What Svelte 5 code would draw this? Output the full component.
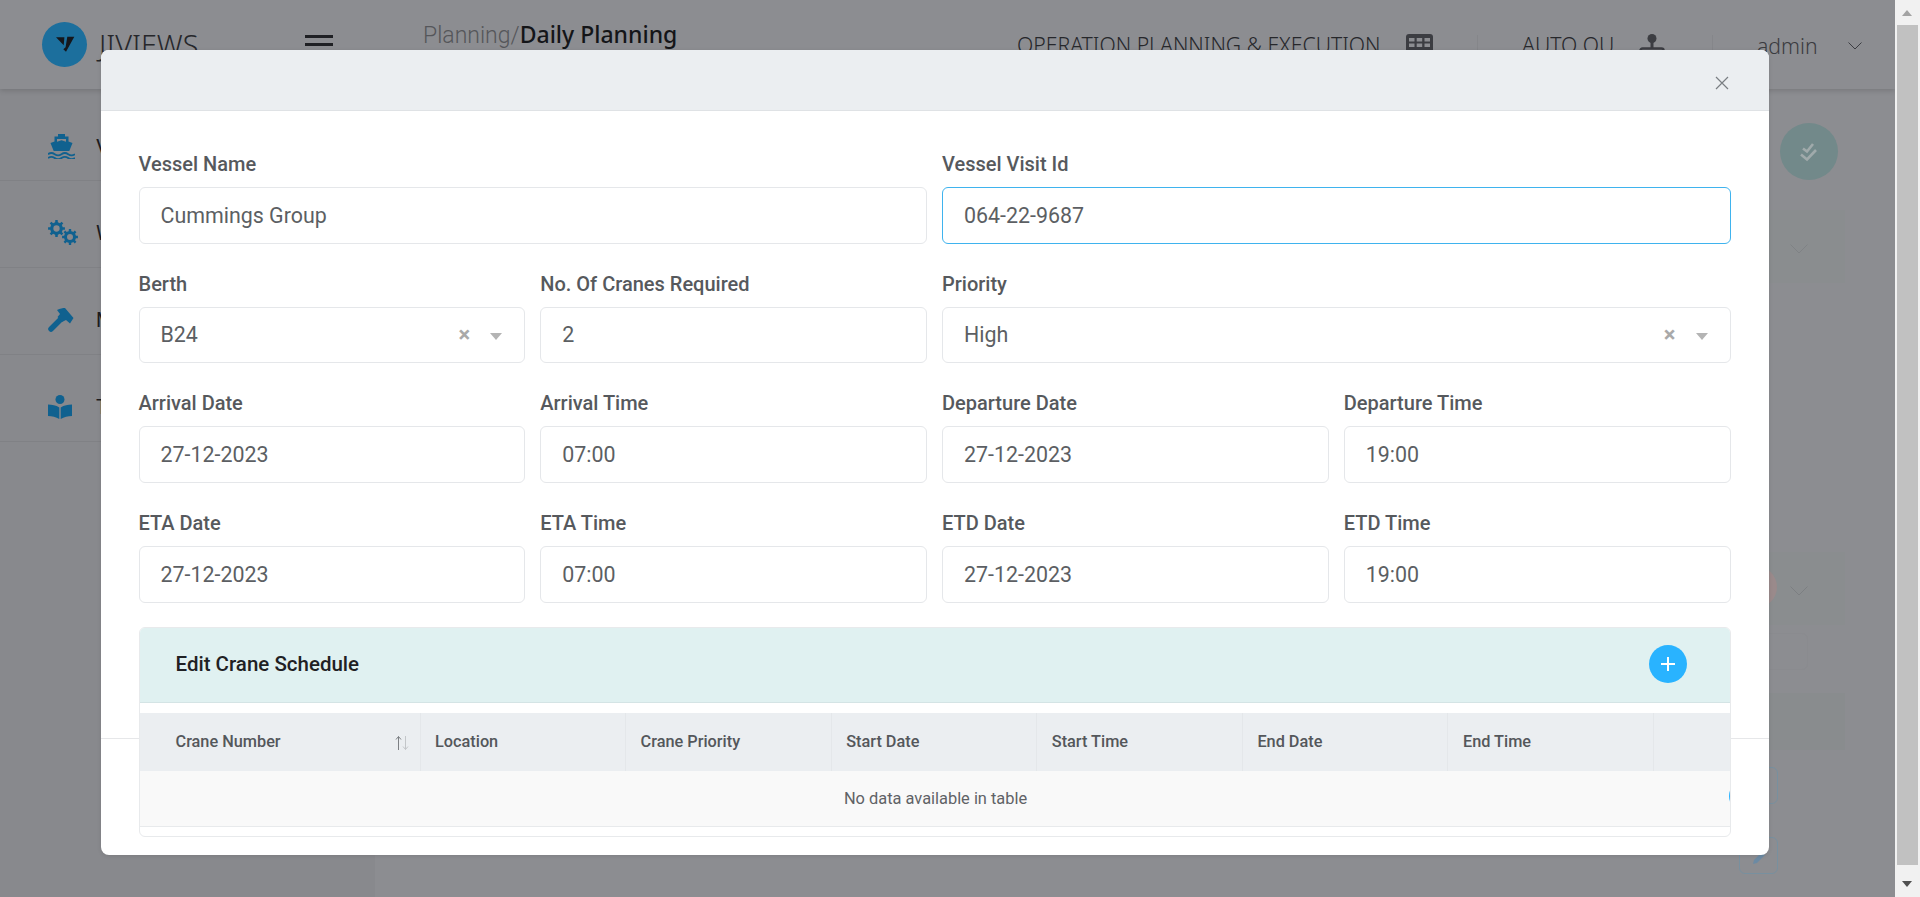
<script>
  const fields = [
    { label: 'Vessel Name', value: 'Cummings Group', span: 2 },
    { label: 'Vessel Visit Id', value: '064-22-9687', span: 2, focus: true },
    { label: 'Berth', value: 'B24', select: true },
    { label: 'No. Of Cranes Required', value: '2' },
    { label: 'Priority', value: 'High', span: 2, select: true },
    { label: 'Arrival Date', value: '27-12-2023' },
    { label: 'Arrival Time', value: '07:00' },
    { label: 'Departure Date', value: '27-12-2023' },
    { label: 'Departure Time', value: '19:00' },
    { label: 'ETA Date', value: '27-12-2023' },
    { label: 'ETA Time', value: '07:00' },
    { label: 'ETD Date', value: '27-12-2023' },
    { label: 'ETD Time', value: '19:00' }
  ];
  const columns = ['Crane Number', 'Location', 'Crane Priority', 'Start Date', 'Start Time', 'End Date', 'End Time', ''];
  const nav = ['Vessels', 'Work Plan', 'Maintenance', 'Tasks'];

  function gear(cx, cy, outer, inner, teeth) {
    let d = '';
    const step = (Math.PI * 2) / teeth;
    for (let i = 0; i < teeth; i++) {
      const a = i * step;
      const pts = [
        [inner, a - step * 0.5],
        [inner, a - step * 0.27],
        [outer, a - step * 0.18],
        [outer, a + step * 0.18],
        [inner, a + step * 0.27]
      ];
      for (const [r, t] of pts) {
        d += (d ? 'L' : 'M') + (cx + r * Math.cos(t)).toFixed(2) + ' ' + (cy + r * Math.sin(t)).toFixed(2);
      }
    }
    d += 'Z';
    const h = inner * 0.5;
    d += `M${cx - h} ${cy}a${h} ${h} 0 1 0 ${2 * h} 0a${h} ${h} 0 1 0 ${-2 * h} 0Z`;
    return d;
  }
  const gears = gear(8.5, 8.5, 8.5, 6.3, 8) + gear(22, 17, 8, 6, 8);
</script>

<div class="screen">
  <div class="page">
    <header class="topbar">
      <div class="brand">
        <span class="logo">
          <svg viewBox="0 0 45 45" width="45" height="45">
            <path d="M14 15.3h8.4l-.7 8z" fill="#15171c" />
            <path d="M25.3 14.7h7L24 29.7l-2.7-2.4 2.3-2z" fill="#15171c" />
          </svg>
        </span>
        <span class="brand-name">JIVIEWS</span>
      </div>
      <div class="burger"><i></i><i></i><i></i></div>
      <div class="crumbs"><span>Planning/</span><b>Daily Planning</b></div>
      <div class="tools">
        <span class="tool-text first">OPERATION PLANNING &amp; EXECUTION</span>
        <svg class="tool-icon" viewBox="0 0 27 22" width="27" height="22">
          <rect width="27" height="22" rx="3" fill="#3c3d42" />
          <g fill="#8c8d91">
            <rect x="3" y="4" width="5.5" height="3.5" /><rect x="10.7" y="4" width="5.5" height="3.5" /><rect x="18.5" y="4" width="5.5" height="3.5" />
            <rect x="3" y="9.5" width="5.5" height="3.5" /><rect x="10.7" y="9.5" width="5.5" height="3.5" /><rect x="18.5" y="9.5" width="5.5" height="3.5" />
          </g>
        </svg>
        <span class="sep one"></span>
        <span class="tool-text second">AUTO OU</span>
        <svg class="tool-icon org" viewBox="0 0 26 24" width="26" height="24">
          <circle cx="13" cy="4.5" r="4.5" fill="#3c3d42" />
          <path d="M13 8v6" stroke="#3c3d42" stroke-width="3" />
          <path d="M1.5 23v-6.500a2 2 0 0 1 2-2h19a2 2 0 0 1 2 2V23" fill="none" stroke="#3c3d42" stroke-width="2.500" />
        </svg>
        <span class="sep two"></span>
        <span class="admin">admin</span>
        <svg class="chev" viewBox="0 0 14 8" width="14" height="8"><path d="M.5.5 7 7l6.500-6.500" fill="none" stroke="#3c3d42" /></svg>
      </div>
    </header>

    <div class="below">
      <aside class="sidebar">
        {#each nav as item, i}
          <div class="nav-item">
            <span class="nav-icon">
              {#if i === 0}
                <svg viewBox="0 0 27 25" width="27" height="25" fill="#10618f">
                  <path d="M10 0h7v2.500h3.500v5l4 1.500-3.200 8H5.700L2.500 9l4-1.500v-5H10zM9 5v2.700l4.500-1.400L18 7.700V5z" fill-rule="evenodd" />
                  <path d="M0 20.200q3.400-2.400 6.700 0t6.800 0q3.400-2.400 6.700 0t6.800 0M0 24q3.400-2.400 6.700 0t6.800 0q3.400-2.400 6.700 0t6.800 0" fill="none" stroke="#10618f" stroke-width="1.800" />
                </svg>
              {:else if i === 1}
                <svg viewBox="0 0 30 25" width="30" height="25"><path d={gears} fill="#10618f" fill-rule="evenodd" /></svg>
              {:else if i === 2}
                <svg viewBox="0 0 27 24" width="27" height="24" fill="#10618f">
                  <path d="M3 21 15 9" stroke="#10618f" stroke-width="5.500" stroke-linecap="round" />
                  <path d="M9 2C12 .5 15 0 17 0l8.500 10-3.500 5.500-4-3.500-4 2-4.500-5L12 6z" />
                </svg>
              {:else}
                <svg viewBox="0 0 24 24" width="24" height="24" fill="#10618f">
                  <circle cx="12" cy="4.500" r="4.500" />
                  <path d="M0 9.500c4 0 8 .8 11.300 3V24C8 22 4 21 0 21zM24 9.500c-4 0-8 .8-11.300 3V24c3.300-2 7.300-3 11.300-3z" />
                </svg>
              {/if}
            </span>
            <span class="nav-label">{item}</span>
          </div>
        {/each}
      </aside>

      <main class="content">
        <div class="ghost-circle">
          <svg viewBox="0 0 20 20" width="20" height="20" fill="none" stroke="#a0aaab" stroke-width="2.600">
            <path d="M4 6.500 8 9.500 14 2" /><path d="M2 12.500 8 17.500 17 8" />
          </svg>
        </div>
        <div class="band first-band">
          <svg class="ghost-chev" viewBox="0 0 18 10" width="18" height="10"><path d="M.5.5 9 9l8.500-8.500" fill="none" stroke="#7f8285" /></svg>
        </div>
        <div class="band second-band">
          <span class="ghost-red"></span>
          <svg class="ghost-chev" viewBox="0 0 18 10" width="18" height="10"><path d="M.5.5 9 9l8.500-8.500" fill="none" stroke="#7c7f82" /></svg>
        </div>
        <div class="outline-row"></div>
        <div class="band third-band"></div>
        <div class="ghost-btn"></div>
        <div class="ghost-btn pen">
          <svg viewBox="0 0 14 14" width="14" height="14"><path d="M1 13l1-4 8-8 3 3-8 8z" fill="#6c8aa3" /></svg>
        </div>
      </main>
    </div>
  </div>

  <div class="scrollbar">
    <span class="arrow up"></span>
    <span class="thumb"></span>
    <span class="arrow down"></span>
  </div>

  <section class="modal">
    <div class="modal-head">
      <svg class="close" viewBox="0 0 14 14" width="14" height="14"><path d="M1 1l12 12M13 1 1 13" stroke="#7a7e83" stroke-width="1.200" fill="none" /></svg>
    </div>
    <div class="modal-body">
      <div class="form">
        {#each fields as f}
          <div class="field" class:wide={f.span === 2}>
            <div class="label">{f.label}</div>
            <div class="control" class:focus={f.focus}>
              <span class="value">{f.value}</span>
              {#if f.select}
                <span class="clear">×</span>
                <span class="caret"></span>
              {/if}
            </div>
          </div>
        {/each}
      </div>

      <div class="card">
        <div class="card-head">
          <span class="card-title">Edit Crane Schedule</span>
          <span class="add">
            <svg viewBox="0 0 16 16" width="16" height="16"><path d="M8 1v14M1 8h14" stroke="#fff" stroke-width="2" /></svg>
          </span>
        </div>
        <div class="table-wrap">
          <table>
            <thead>
              <tr>
                {#each columns as c, i}
                  <th class:firstcol={i === 0}>
                    {c}
                    {#if i === 0}
                      <svg class="sort" viewBox="0 0 14 16" width="14" height="16" fill="none">
                        <path d="M3.500 15V1.500M1 4.500l2.500-3 2.500 3" stroke="#7d8084" />
                        <path d="M10.500 1v13.500M8 11.500l2.500 3 2.500-3" stroke="#c3c6c9" />
                      </svg>
                    {/if}
                  </th>
                {/each}
              </tr>
            </thead>
            <tbody>
              <tr><td colspan="8">No data available in table</td></tr>
            </tbody>
          </table>
          <span class="edge-dot"></span>
        </div>
      </div>
    </div>
    <div class="modal-foot"></div>
  </section>
</div>

<style>
  :global(body) { margin: 0; background: #8c8d91; }
  * { box-sizing: border-box; }

  .screen { position: relative; display: flex; width: 1920px; height: 897px; overflow: hidden; font-family: Roboto, "Liberation Sans", sans-serif; }
  .page { display: flex; flex-direction: column; width: 1895px; background: #8c8d91; }

  .topbar { position: relative; display: flex; align-items: flex-start; height: 89px; box-shadow: 0 2px 5px rgba(0, 0, 0, .14); font-family: "Noto Sans", sans-serif; color: #1c1c20; }
  .brand { display: flex; align-items: center; width: 305px; padding: 22px 0 0 42px; gap: 12px; }
  .logo { display: block; width: 45px; height: 45px; border-radius: 50%; background: #1c6f9d; }
  .brand-name { font-size: 28.800px; font-weight: 300; line-height: 45px; color: #26272b; }
  .burger { display: flex; flex-direction: column; gap: 5px; width: 28px; padding-top: 35px; }
  .burger i { display: block; height: 3px; background: #1f2024; }
  .crumbs { margin-left: 90px; padding-top: 17px; font-size: 23px; line-height: 34px; white-space: nowrap; }
  .crumbs span { font-family: Roboto, sans-serif; font-weight: 300; color: #55565a; }
  .crumbs b { font-weight: 500; color: #141518; }
  .tools { position: absolute; inset: 0 auto auto 1017px; display: flex; align-items: flex-start; height: 89px; }
  .tool-text { padding-top: 30px; font-size: 21.200px; font-weight: 300; line-height: 30px; white-space: nowrap; color: #26272b; }
  .tool-text.first { width: 389px; }
  .tool-text.second { width: 117px; }
  .tool-icon { margin-top: 34px; flex: none; }
  .sep { width: 1px; height: 40px; margin-top: 35px; background: #85868a; }
  .sep.one { margin: 35px 44px 0 44px; }
  .sep.two { margin: 35px 44px 0 47px; }
  .admin { width: 91px; padding-top: 31px; font-size: 21.200px; font-weight: 300; line-height: 30px; color: #3a3b3f; }
  .chev { margin-top: 42px; flex: none; }

  .below { display: flex; flex: 1; }
  .sidebar { width: 375px; flex: none; background: #88898d; }
  .nav-item { position: relative; display: flex; align-items: center; height: 87px; padding: 17px 0 0 48px; border-bottom: 1px solid #808185; }
  .nav-item:first-child { height: 92px; padding-top: 24px; }
  .nav-icon { display: flex; width: 48px; flex: none; }
  .nav-label { font-size: 20px; color: #1c1c20; white-space: nowrap; }

  .content { display: flex; flex: 1; flex-direction: column; align-items: flex-end; padding: 34px 50px 0 25px; }
  .ghost-circle { display: flex; align-items: center; justify-content: center; width: 58px; height: 57px; margin-right: 7px; border-radius: 50%; background: #72898a; }
  .band { position: relative; width: 100%; background: #8a8d8f; }
  .first-band { height: 73px; margin-top: 30px; }
  .second-band { height: 73px; margin-top: 269px; }
  .third-band { height: 57px; margin-top: 23px; background: #898c8e; }
  .ghost-red { position: absolute; top: 14px; right: 68px; width: 42px; height: 42px; border-radius: 50%; background: #9a8a8b; }
  .ghost-chev { position: absolute; top: 34px; right: 37px; }
  .outline-row { width: calc(100% - 37px); height: 37px; margin: 8px 37px 0 0; border: 1px solid #8a8b8f; border-radius: 6px; }
  .ghost-btn { display: flex; align-items: center; justify-content: center; width: 39px; height: 37px; margin: 17px 67px 0 0; border: 1px solid #78909f; border-radius: 6px; }
  .ghost-btn.pen { margin-top: 33px; padding-top: 4px; }

  .scrollbar { position: relative; width: 25px; background: #f1f1f1; }
  .thumb { position: absolute; top: 25px; left: 2px; width: 21px; height: 840px; background: #c1c1c1; }
  .arrow { position: absolute; left: 7px; width: 0; height: 0; border-left: 5px solid transparent; border-right: 5px solid transparent; }
  .arrow.up { top: 10px; border-bottom: 6px solid #a3a3a3; }
  .arrow.down { top: 881px; border-top: 6px solid #505050; }

  .modal { position: absolute; top: 50px; left: 101px; display: flex; flex-direction: column; width: 1668px; height: 805px; border-radius: 8px; background: #fff; box-shadow: 0 1px 4px rgba(0, 0, 0, .1); }
  .modal-head { position: relative; height: 61px; flex: none; border-radius: 8px 8px 0 0; border-bottom: 1px solid #dfe2e5; background: #ebeef1; }
  .close { position: absolute; top: 26px; right: 40px; }
  .modal-body { height: 627px; flex: none; padding: 41px 38.500px 0 37.500px; }
  .modal-foot { flex: 1; border-top: 1px solid #e6e7e9; }

  .form { display: grid; grid-template-columns: repeat(4, 1fr); column-gap: 15px; row-gap: 28px; }
  .field.wide { grid-column: span 2; }
  .label { height: 27px; margin-bottom: 8px; font-size: 20px; font-weight: 500; line-height: 24.500px; color: #56595d; }
  .control { position: relative; display: flex; align-items: center; height: 56.67px; padding: 0 21px; border: 1px solid #e5e7ea; border-radius: 6px; font-size: 21.400px; color: #5c5f63; }
  .control.focus { border-color: #3fb3ee; }
  .clear { position: absolute; top: 50%; right: 54px; font-size: 22px; font-weight: 700; line-height: 22px; color: #a9a9a9; transform: translateY(-50%); }
  .caret { position: absolute; top: 25px; right: 22px; border-left: 6px solid transparent; border-right: 6px solid transparent; border-top: 7px solid #b4b4b4; }

  .card { position: relative; z-index: 1; height: 210px; margin-top: 24px; overflow: hidden; border: 1px solid #e8eaec; border-radius: 6px; background: #fff; }
  .card-head { display: flex; align-items: center; justify-content: space-between; height: 76px; margin: -1px -1px 0; padding: 0 44px 0 37px; border-bottom: 1px solid #d4e4e5; background: #e0f1f1; }
  .card-title { font-size: 20.500px; font-weight: 500; color: #1f2124; }
  .add { display: flex; align-items: center; justify-content: center; width: 38px; height: 38px; border-radius: 50%; background: #29b3ff; }
  .table-wrap { position: relative; padding: 10px 0; }
  table { width: 100%; table-layout: fixed; border-collapse: collapse; }
  th { position: relative; width: 205.600px; height: 58px; padding: 0 14.500px; border-right: 1px solid #e4e7ea; background: #ebeef1; font-size: 16.300px; font-weight: 500; text-align: left; color: #54575b; }
  th:last-child { width: 78px; border-right: 0; }
  th.firstcol { width: 280.500px; padding-left: 36px; }
  .sort { position: absolute; top: 22px; right: 11px; }
  td { height: 56px; border-bottom: 1px solid #e8eaec; background: #f9f9f9; font-size: 16.400px; text-align: center; color: #5f6266; }
  .edge-dot { position: absolute; top: 78px; right: -29px; width: 30px; height: 30px; border-radius: 50%; background: #29b3ff; }
</style>
